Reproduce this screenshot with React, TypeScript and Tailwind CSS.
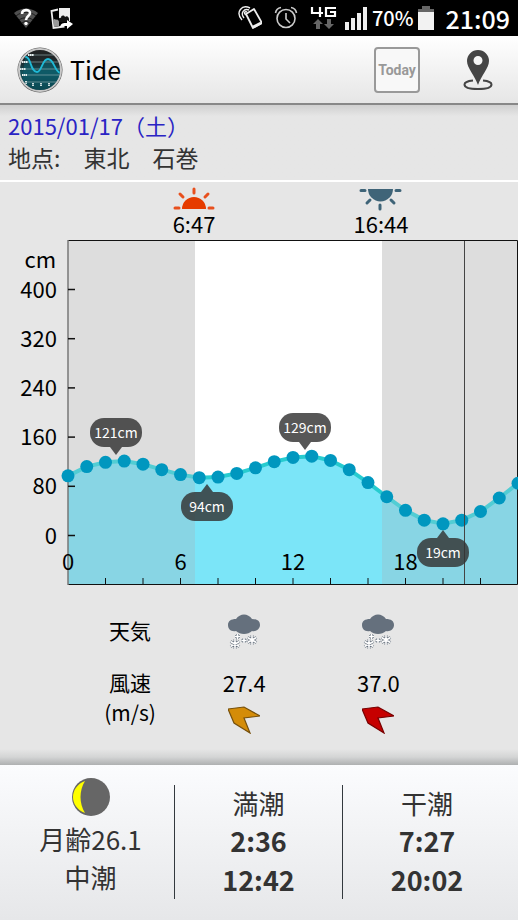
const hourly = [
  97, 112, 119, 121, 116, 107, 99, 94, 95, 101, 110, 120, 127, 129, 122, 107, 86, 63, 41, 25, 19, 25,
  39, 61, 85,
]

const peaks = [
  { x: 116, y: 273, label: "121cm", above: true },
  { x: 207, y: 302, label: "94cm", above: false },
  { x: 305, y: 268, label: "129cm", above: true },
  { x: 443, y: 348, label: "19cm", above: false },
]

const toX = (hour: number) => 68 + hour * 18.75
const toY = (cm: number) => 353.5 - cm * 0.615

const points = hourly.map((cm, hour) => `${toX(hour)},${toY(cm)}`).join(" ")

function WifiUnknownIcon() {
  return (
    <svg className="h-6 w-6" viewBox="0 0 24 24" fill="none">
      <path d="M0 7C7 1 17 1 24 7L12 22z" fill="#505050" />
      <path d="M2 10c6-5 14-5 20 0M5 14c4-3 10-3 14 0M8 17c3-2 5-2 8 0" stroke="#1c1c1c" />
      <path d="M8 8c0-5 8-5 8-1 0 3-4 3-4 7" stroke="#fff" strokeWidth="2.6" />
      <circle cx="12" cy="17.5" r="1.7" fill="#fff" />
    </svg>
  )
}

function PhotoShareIcon() {
  return (
    <svg className="h-6 w-6" viewBox="0 0 24 24" fill="none">
      <path d="M8 3.500L1.500 5l2 17 11-1.500" stroke="#eee" strokeWidth="1.800" />
      <path d="M3 16c0-3 2-4 3-2 1-1 3 0 3 2v4l-5 1z" fill="#999" />
      <path d="M9 2h11v13H9z" fill="#eee" />
      <path d="M9 15c-1-3 1-4 2-3 0-3 3-3 4-1 2-2 4 0 4 2v3H9z" fill="#111" />
      <path d="M10 21c1-4 3-4 7-4v-3l6 4-6 5v-3c-3 0-5 0-7 1z" fill="#fff" />
    </svg>
  )
}

function NfcIcon() {
  return (
    <svg className="h-6 w-6" viewBox="0 0 24 24" fill="none" stroke="#eee">
      <path d="M8 8l8-5 8 14-9 5z" strokeWidth="1.800" strokeLinejoin="round" />
      <path d="M15 21l8-4" strokeWidth="2.600" />
      <path d="M4 14C-3 6 4-2 12 2M6 12C2 7 6 2 11 4M8 9C5 7 7 5 9 6" strokeWidth="1.400" />
    </svg>
  )
}

function AlarmIcon() {
  return (
    <svg className="h-6 w-6" viewBox="0 0 24 24" fill="none" stroke="#ccc" strokeWidth="1.6">
      <circle cx="12" cy="12.5" r="9" />
      <path d="M12 7v6l4 4M1.500 7C2 4 4 2 7 1.500M22.500 7C22 4 20 2 17 1.500" />
    </svg>
  )
}

function NetworkIcon() {
  return (
    <svg className="h-6 w-7" viewBox="0 0 28 24">
      <path d="M2 1v6h11M10 1v10M26 2H16v8h9V6h-5" fill="none" stroke="#fff" strokeWidth="2.2" />
      <path d="M8 13l5 5h-3v5H6v-5H3zM19 23l-5-5h3v-5h4v5h3z" fill="#666" />
    </svg>
  )
}

function SignalIcon() {
  return (
    <svg className="h-6 w-6" viewBox="0 0 24 24" fill="#eee">
      <path d="M1 16h4v8H1zM7 12h4v12H7zM13 7h4v17h-4zM19 1h4v23h-4z" />
    </svg>
  )
}

function BatteryIcon() {
  return (
    <svg className="h-6 w-4" viewBox="0 0 16 24">
      <path d="M4 0h8v3h4v4H0V3h4z" fill="#666" />
      <path d="M0 6h16v18H0z" fill="#f2f2f2" />
    </svg>
  )
}

function TideLogo() {
  return (
    <svg className="h-12 w-12" viewBox="0 0 48 48" fill="none">
      <defs>
        <linearGradient id="dial" x2="0" y2="1">
          <stop offset="0" stopColor="#222" />
          <stop offset=".3" stopColor="#20282b" />
          <stop offset=".55" stopColor="#10505a" />
          <stop offset="1" stopColor="#0c2529" />
        </linearGradient>
        <clipPath id="face">
          <circle cx="24" cy="24" r="20" />
        </clipPath>
      </defs>
      <circle cx="24" cy="24" r="22.500" fill="#555" />
      <circle cx="24" cy="24" r="21" fill="url(#dial)" stroke="#c8c8c8" strokeWidth="2" />
      <g clipPath="url(#face)">
        <path d="M9 11c6-2 5 15 12 15 5 0 5-13 11-13 6 0 6 11 12 14v20H5z" fill="#0d6472" opacity=".55" />
        <path d="M14 9h30M12 16h32M10 23h34M10 29h34M10 36h34" stroke="#9ab5b8" strokeWidth=".6" />
        <path
          d="M6 16h6M4 23h6M6 29h5M12 9h6M10 35v3M17 37v3M25 37v3M33 37v3"
          stroke="#e5eeee"
          strokeWidth="1.800"
          strokeDasharray="1.600 .4"
        />
        <path d="M9 11c6-2 5 15 12 15 5 0 5-13 11-13 6 0 6 11 12 14" stroke="#20b9d6" strokeWidth="1.800" />
      </g>
    </svg>
  )
}

function PinIcon() {
  return (
    <svg className="h-10 w-8" viewBox="0 0 32 40" fill="none">
      <path
        d="M11 30.500C5 31 2.500 33 2.500 34.500c0 3 6 4.500 13.500 4.500s13.500-1.500 13.500-4.500c0-1.500-2.500-3.500-8.500-4"
        stroke="#454545"
        strokeWidth="2"
      />
      <path
        d="M16 35C13 26 5 18 5 11a11 11 0 0 1 22 0c0 7-8 15-11 24zM16 6a4.500 4.500 0 1 0 0 9 4.500 4.500 0 0 0 0-9z"
        fill="#454545"
        fillRule="evenodd"
      />
    </svg>
  )
}

function SnowIcon() {
  const flakes =
    "M7 25v10M2.500 27.500l9 5M11.500 27.500l-9 5M24 21v10M19.500 23.500l9 5M28.500 23.500l-9 5M9.500 20v5M7 22.500h5M16 24v5M13.500 26.500h5"
  return (
    <svg className="mx-auto h-9 w-8" viewBox="0 0 32 36" fill="none" aria-label="雪" role="img">
      <path
        d="M8 5c4-6 12-6 16 0 5 0 8 2 8 6s-4 7-8 6c-4 4-12 4-16 0-5 1-8-2-8-6s3-6 8-6z"
        fill="#65707d"
      />
      <path d={flakes} stroke="#65707d" strokeWidth="2.800" />
      <path d={flakes} stroke="#fff" strokeWidth="1.600" />
    </svg>
  )
}

function WindArrow({ color, edge }: { color: string; edge: string }) {
  return (
    <svg className="mx-auto h-7 w-8" viewBox="0 0 32 28">
      <path d="M0 3l16-2 16 9-16 2 6 15L6 17z" fill={color} stroke={edge} strokeWidth="1.200" />
    </svg>
  )
}

function MoonIcon() {
  return (
    <svg className="-mt-2 h-10 w-10" viewBox="0 0 40 40">
      <circle cx="20" cy="20" r="19" fill="#666" />
      <path d="M14 4C-2 10-2 30 14 36C8 26 8 14 14 4z" fill="#ff0" />
    </svg>
  )
}

function TideChart() {
  return (
    <svg
      className="block h-auto w-full"
      viewBox="0 0 518 418"
      fontFamily="'Noto Sans CJK JP', sans-serif"
      fontSize="22"
    >
      <defs>
        {/* night / day / night bands share the same hard stops */}
        <linearGradient id="sky" gradientUnits="userSpaceOnUse" x1="0" x2="518" y1="0" y2="0">
          <stop offset="0.3764" stopColor="#ddd" />
          <stop offset="0.3764" stopColor="#fff" />
          <stop offset="0.7365" stopColor="#fff" />
          <stop offset="0.7365" stopColor="#ddd" />
        </linearGradient>
        <linearGradient id="water" gradientUnits="userSpaceOnUse" x1="0" x2="518" y1="0" y2="0">
          <stop offset="0.3764" stopColor="#88d5e4" />
          <stop offset="0.3764" stopColor="#7be5f8" />
          <stop offset="0.7365" stopColor="#7be5f8" />
          <stop offset="0.7365" stopColor="#88d5e4" />
        </linearGradient>
        <linearGradient id="line" gradientUnits="userSpaceOnUse" x1="0" x2="518" y1="0" y2="0">
          <stop offset="0.3764" stopColor="#52cdd4" />
          <stop offset="0.3764" stopColor="#27ccd0" />
          <stop offset="0.7365" stopColor="#27ccd0" />
          <stop offset="0.7365" stopColor="#52cdd4" />
        </linearGradient>
      </defs>

      {/* sunrise and sunset */}
      <g stroke="#e8501e" strokeWidth="3" strokeLinecap="round">
        <path d="M182 27a12 12 0 0 1 24 0z" fill="#e63c00" stroke="none" />
        <path d="M175 26h4M209 26h4M194 7v4M180 12l3 3M208 12l-3 3" />
      </g>
      <g stroke="#3f6478" strokeWidth="3" strokeLinecap="round">
        <path d="M368 7a12 12 0 0 0 25 0z" fill="#3f6478" stroke="none" />
        <path d="M361 8.500h4M396 8.500h4M380 23v4M367 21l3-3M394 21l-3-3" />
      </g>
      <text x="194" y="51" textAnchor="middle">6:47</text>
      <text x="381" y="51" textAnchor="middle">16:44</text>

      <rect x="68" y="59" width="450" height="343" fill="url(#sky)" />
      <polygon points={`68,402 ${points} 518,402`} fill="url(#water)" />
      <path d="M68 58.500H517.500V402.500H68" fill="none" stroke="#111" />
      <path d="M68 58V403" stroke="#777" strokeWidth="1.500" />

      <text x="56" y="86" textAnchor="end">cm</text>
      {[400, 320, 240, 160, 80, 0].map((cm) => (
        <g key={cm}>
          <text x="57" y={toY(cm) + 8} textAnchor="end">{cm}</text>
          <path d={`M68 ${toY(cm)}h7`} stroke="#111" strokeWidth="1.500" />
        </g>
      ))}
      {[2, 4, 6, 8, 10, 12, 14, 16, 18, 20, 22].map((hour) => (
        <path key={hour} d={`M${toX(hour)} 396v6`} stroke="#111" />
      ))}
      {[0, 6, 12, 18].map((hour) => (
        <text key={hour} x={toX(hour)} y="388" textAnchor="middle">{hour}</text>
      ))}

      <polyline points={points} fill="none" stroke="url(#line)" strokeWidth="4" />
      {hourly.map((cm, hour) => (
        <circle key={hour} cx={toX(hour)} cy={toY(cm)} r="6.500" fill="#0097bf" />
      ))}
      <path d="M464.500 59V402" stroke="#444" />

      {peaks.map((peak) => {
        const top = peak.above ? peak.y - 37 : peak.y + 8
        const base = peak.above ? peak.y - 8 : peak.y + 8
        return (
          <g key={peak.label}>
            <g fill="#333" opacity=".82">
              <rect x={peak.x - 26} y={top} width="52" height="29" rx="14" />
              <path d={`M${peak.x - 6} ${base}L${peak.x} ${peak.y}L${peak.x + 6} ${base}z`} />
            </g>
            <text x={peak.x} y={top + 20} textAnchor="middle" fontSize="14" fill="#fff">
              {peak.label}
            </text>
          </g>
        )
      })}
    </svg>
  )
}

export default function App() {
  return (
    <div className="flex min-h-screen flex-col bg-[#e6e6e6] font-['Noto_Sans_CJK_JP',sans-serif] text-black">
      <div className="flex h-9 items-center justify-between bg-black pr-2 pl-3.5 text-white">
        <div className="flex items-center gap-3">
          <WifiUnknownIcon />
          <PhotoShareIcon />
        </div>
        <div className="flex items-center">
          <div className="flex items-center gap-3">
            <NfcIcon />
            <AlarmIcon />
            <NetworkIcon />
          </div>
          <div className="ml-1.5 flex items-center gap-1">
            <SignalIcon />
            <span className="text-xl leading-8 font-medium">70%</span>
            <BatteryIcon />
          </div>
          <span className="ml-3 text-[25px] leading-8 font-medium">21:09</span>
        </div>
      </div>

      <header className="flex h-[69px] items-center border-b-2 border-[#888] bg-linear-to-b from-white to-[#e6e6e6] pr-6 pl-4">
        <TideLogo />
        <h1 className="ml-1.5 text-[25px]">Tide</h1>
        <button
          type="button"
          className="ml-auto h-[46px] w-[46px] rounded-[4px] border-2 border-[#999] bg-[#f8f8f8] font-['Roboto',sans-serif] text-sm font-bold text-[#999]"
        >
          Today
        </button>
        <button type="button" aria-label="地点を選択" className="ml-[42px]">
          <PinIcon />
        </button>
      </header>

      <section className="border-b-2 border-white bg-linear-to-b from-[#d0d0d0] to-[#e6e6e6] to-15% px-2 pt-1 pb-[7px] text-[22px] leading-8">
        <p className="text-[#2a24c4]">2015/01/17（土）</p>
        <p className="text-[23px] whitespace-pre text-[#333]">地点:　東北　石巻</p>
      </section>

      <TideChart />

      <div className="pr-[14%] pl-[16%]">
        <table className="w-full table-fixed text-center text-[22px] leading-7">
          <tbody>
            <tr className="h-[60px]">
              <th scope="row" className="w-[26%] text-[21px] font-normal whitespace-nowrap">天気</th>
              <td className="w-[37%] pt-1"><SnowIcon /></td>
              <td className="w-[37%] pt-1"><SnowIcon /></td>
            </tr>
            <tr>
              <th scope="rowgroup" rowSpan={2} className="text-[21px] leading-[30px] font-normal">
                風速
                <br />
                (m/s)
              </th>
              <td className="pt-2">27.4</td>
              <td className="pt-2">37.0</td>
            </tr>
            <tr>
              <td className="pt-2.5"><WindArrow color="#d48c08" edge="#76500c" /></td>
              <td className="pt-2.5"><WindArrow color="#c60000" edge="#700" /></td>
            </tr>
          </tbody>
        </table>
      </div>

      <div className="mt-auto h-4 bg-linear-to-b from-[#e6e6e6] via-[#d4d5d5] to-[#aeb0b1]" />
      <footer className="grid grid-cols-3 divide-x divide-[#33393e] bg-linear-to-b from-[#fbfcfe] to-[#e6e7e9] px-[7px] pt-5 pb-[21px] text-[26px] text-[#333]">
        <div className="flex flex-col items-center">
          <MoonIcon />
          <span className="mt-1 leading-9">月齢26.1</span>
          <span className="leading-10">中潮</span>
        </div>
        <div className="flex flex-col items-center">
          <span className="leading-9">満潮</span>
          <span className="text-[27px] leading-[39px] font-bold">2:36</span>
          <span className="text-[27px] leading-[39px] font-bold">12:42</span>
        </div>
        <div className="flex flex-col items-center">
          <span className="leading-9">干潮</span>
          <span className="text-[27px] leading-[39px] font-bold">7:27</span>
          <span className="text-[27px] leading-[39px] font-bold">20:02</span>
        </div>
      </footer>
    </div>
  )
}
